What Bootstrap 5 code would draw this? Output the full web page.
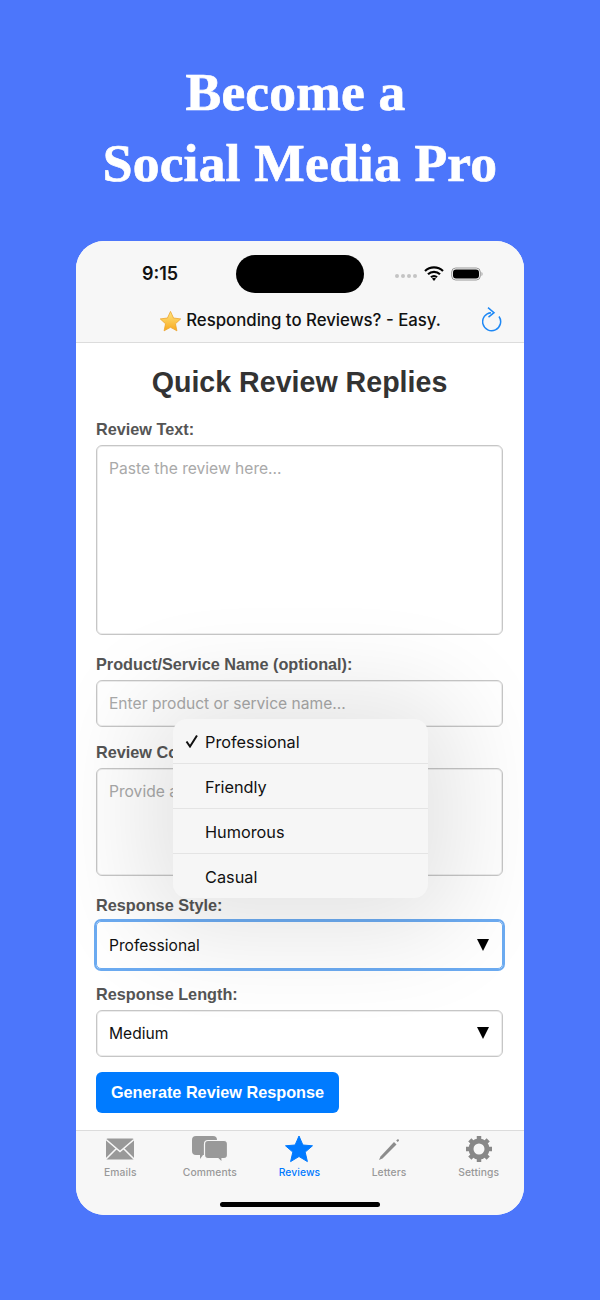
<!DOCTYPE html>
<html lang="en">
<head>
<meta charset="UTF-8">
<title>Quick Review Replies</title>
<link href="https://cdn.jsdelivr.net/npm/bootstrap@5.3.2/dist/css/bootstrap.min.css" rel="stylesheet">
<style>
html, body { height: 1300px; overflow: hidden; }
body { background: #4c76fb; font-family: Inter, "Liberation Sans", sans-serif; }
.promo-title { font-family: "Liberation Serif", serif; font-weight: 700; font-size: 53.5px; line-height: 71px; color: #fff; padding-top: 57px; height: 241px; margin: 0; letter-spacing: .2px; -webkit-text-stroke: .7px #fff; }
.title-first { padding-right: 9px; }
.phone { width: 448px; height: 974px; border-radius: 28px; background: #fff; overflow: hidden; position: relative; }
.top-area { height: 102px; background: #f7f7f7; border-bottom: 1px solid #dcdcdc; }
.status-row { height: 62px; padding: 3px 41px 0 66px; }
.clock { font-size: 18px; font-weight: 600; color: #111; width: 60px; }
.island { width: 128px; height: 38px; background: #000; border-radius: 19px; margin-left: 6px; }
.status-icons { width: 91px; gap: 7px; }
.sig-dots { gap: 2px; }
.sig-dots i { display: block; width: 4px; height: 4px; border-radius: 50%; background: #c4c4c4; }
.page-head { height: 40px; padding: 0 0 4px 0; position: relative; }
.head-text { font-size: 16.8px; font-weight: 500; color: #111; }
.reload-icon { position: absolute; right: 22px; top: 4px; }
.form-area { height: 787px; padding: 20px 21px 0 20px; background: #fff; }
.form-area h1 { font-family: "Liberation Sans", sans-serif; font-size: 28.6px; font-weight: 700; color: #333; text-align: center; margin: 0 0 20px; line-height: 38px; }
.field-label { display: block; font-family: "Liberation Sans", sans-serif; font-weight: 700; font-size: 16.25px; line-height: 16px; color: #555; margin: 0 0 8px; }
.form-control.app-field { border: 1px solid #c6c6c6; border-radius: 6px; font-size: 15.6px; color: #111; padding: 12px 12px; background: transparent; box-shadow: inset 0 0 0 1px #ececec; resize: none; font-family: Inter, sans-serif; line-height: 22px; }
.app-field::placeholder { color: #a9a9a9; opacity: 1; }
.gap-area { margin-bottom: 21px; }
.gap-line { margin-bottom: 17px; }
.select-box { height: 47px; border: 1px solid #c6c6c6; box-shadow: inset 0 0 0 1px #ececec; border-radius: 6px; font-size: 15.6px; color: #111; padding: 0 13px 0 12px; }
.select-box.is-open { height: 48px; border: 1px solid #6cabf1; box-shadow: 0 0 0 2px #6cabf1; border-radius: 5px; padding: 2px 13px 0 12px; }
.caret-mark { width: 0; height: 0; border-left: 6px solid transparent; border-right: 6px solid transparent; border-top: 12px solid #000; margin-top: -2px; }
.gen-btn.btn { background: #007bff; border: 0; border-radius: 6px; height: 41px; width: 243px; font-family: "Liberation Sans", sans-serif; font-weight: 700; font-size: 16.25px; padding: 0; color: #fff; margin-top: -2px; }
.tab-strip { height: 85px; background: #f7f7f7; border-top: 1px solid #dcdcdc; position: absolute; left: 0; right: 0; bottom: 0; }
.tab-item { width: 89.6px; height: 44px; color: #999; font-size: 10.3px; font-weight: 500; text-align: center; padding: 4px 1px 0 0; line-height: 12px; letter-spacing: .1px; }
.tab-item svg { display: block; margin: 0 auto 3px; height: 28px; }
.tab-item.is-on { color: #007aff; }
.home-bar { position: absolute; left: 144px; bottom: 8px; width: 160px; height: 5px; border-radius: 3px; background: #000; }
.style-menu { position: absolute; left: 97px; top: 478px; width: 255px; background: #f6f6f6; border-radius: 14px; box-shadow: 0 5px 100px 30px rgba(0,0,0,.11); z-index: 5; overflow: hidden; }
.menu-row { height: 45px; padding: 3px 0 0 32px; font-size: 16.3px; color: #111; border-bottom: 1px solid #e4e4e4; display: flex; align-items: center; position: relative; }
.menu-row:last-child { border-bottom: 0; height: 44px; }
.tick-mark { position: absolute; left: 12px; top: 15px; }
</style>
</head>
<body>
<h2 class="promo-title text-center"><span class="title-first">Become a</span><br>Social Media Pro</h2>
<div class="phone mx-auto">
    <div class="top-area">
        <div class="status-row d-flex align-items-center justify-content-between">
            <div class="clock">9:15</div>
            <div class="island"></div>
            <div class="status-icons d-flex align-items-center justify-content-end">
                <div class="sig-dots d-flex mt-1"><i></i><i></i><i></i><i></i></div>
                <svg width="20" height="15" viewBox="0 0 20 15"><path d="M1 5a13 13 0 0 1 18 0M4 8.300a8.600 8.600 0 0 1 12 0M7 11.200a4.300 4.300 0 0 1 6 0" fill="none" stroke="#000" stroke-width="2.200"/><path d="M10 15l-2-2.400a3 3 0 0 1 4 0z"/></svg>
                <svg width="32" height="14" viewBox="0 0 32 14"><rect x=".7" y="1" width="28.600" height="12" rx="4" fill="none" stroke="#999"/><rect x="2" y="2.400" width="26" height="9.200" rx="3"/><path d="M30.500 5v4a2 2 0 0 0 1-2 2 2 0 0 0-1-2z" fill="#999"/></svg>
            </div>
        </div>
        <div class="page-head d-flex align-items-center justify-content-center">
            <svg class="me-1" width="23" height="22" viewBox="0 0 24 23"><defs><linearGradient id="starFill" x1="0" y1="0" x2="0" y2="1"><stop offset="0" stop-color="#ffe680"/><stop offset="1" stop-color="#f8a91e"/></linearGradient></defs><path d="M12 1.500l3.200 6.900 7.500.9-5.500 5.100 1.500 7.400L12 18.100l-6.700 3.700 1.500-7.400L1.300 9.300l7.500-.9z" fill="url(#starFill)" stroke="#eda32a" stroke-width=".8" stroke-linejoin="round"/></svg>
            <span class="head-text">Responding to Reviews? - Easy.</span>
            <svg class="reload-icon" width="20" height="26" viewBox="0 0 20 26"><path d="M9 5.700A9 9 0 1 0 17 9.500" fill="none" stroke="#1e88f5" stroke-width="1.500"/><path d="M6 .7l6 5-5.500 4.500" fill="none" stroke="#1e88f5" stroke-width="1.500"/></svg>
        </div>
    </div>
    <form class="form-area">
        <h1>Quick Review Replies</h1>
        <label class="field-label">Review Text:</label>
        <textarea class="form-control app-field gap-area" style="height:190px" placeholder="Paste the review here..."></textarea>
        <label class="field-label">Product/Service Name (optional):</label>
        <input class="form-control app-field gap-line" style="height:47px" placeholder="Enter product or service name...">
        <label class="field-label">Review Context:</label>
        <textarea class="form-control app-field gap-area" style="height:108px" placeholder="Provide any additional context..."></textarea>
        <label class="field-label">Response Style:</label>
        <div class="select-box is-open gap-line d-flex align-items-center justify-content-between"><span>Professional</span><span class="caret-mark"></span></div>
        <label class="field-label">Response Length:</label>
        <div class="select-box gap-line d-flex align-items-center justify-content-between"><span>Medium</span><span class="caret-mark"></span></div>
        <button type="button" class="btn gen-btn">Generate Review Response</button>
    </form>
    <div class="style-menu">
        <div class="menu-row"><svg class="tick-mark" width="14" height="14" viewBox="0 0 14 14"><path d="M1.500 7.500l3.500 5 7-11" fill="none" stroke="#111" stroke-width="2"/></svg>Professional</div>
        <div class="menu-row">Friendly</div>
        <div class="menu-row">Humorous</div>
        <div class="menu-row">Casual</div>
    </div>
    <nav class="tab-strip d-flex">
        <div class="tab-item">
            <svg width="30" height="28" viewBox="0 0 30 28"><rect x="1" y="3.500" width="28" height="21" rx="1.500" fill="#999"/><path d="M1 4.500l14 12 14-12M1 24l10.500-10.500M29 24L18.500 13.500" fill="none" stroke="#f7f7f7" stroke-width="1.600"/></svg>
            Emails
        </div>
        <div class="tab-item">
            <svg width="36" height="28" viewBox="0 0 36 28"><path d="M4 1h17a4 4 0 0 1 4 4v11a4 4 0 0 1-4 4H11l-3 4v-4H4a4 4 0 0 1-4-4V5a4 4 0 0 1 4-4z" fill="#999"/><path d="M16 5.500h16a3.500 3.500 0 0 1 3.500 3.500v11a3.500 3.500 0 0 1-3.500 3.500h-2v4l-4-4H16a3.500 3.500 0 0 1-3.500-3.500V9A3.500 3.500 0 0 1 16 5.500z" fill="#999" stroke="#f7f7f7" stroke-width="1.200"/></svg>
            Comments
        </div>
        <div class="tab-item is-on">
            <svg width="28" height="28" viewBox="0 0 28 28"><path d="M14 1l3.900 9 9.600.8-7.300 6.300 2.200 9.500L14 21.500l-8.400 5.100 2.200-9.500L.5 10.800l9.600-.8z" fill="#007aff" stroke="#007aff" stroke-linejoin="round"/></svg>
            Reviews
        </div>
        <div class="tab-item">
            <svg width="22" height="28" viewBox="0 0 22 28"><path d="M1 25l1.500-3.500L16 7l2.500 2.500L4.500 23.500z" fill="#8c8c8c"/><path d="M18.200 5.600l1.500 1.500 1-1.100a1 1 0 0 0-1.500-1.500z" fill="#8c8c8c"/></svg>
            Letters
        </div>
        <div class="tab-item">
            <svg width="26" height="28" viewBox="0 0 26 28"><circle cx="13" cy="14" r="8" fill="none" stroke="#888" stroke-width="5"/><path d="M13 1v26M0 14h26M3.800 4.800l18.400 18.400M22.200 4.800L3.800 23.200" stroke="#888" stroke-width="4.500" stroke-dasharray="4.500 17 4.500"/></svg>
            Settings
        </div>
    </nav>
    <div class="home-bar"></div>
</div>
<script src="https://cdn.jsdelivr.net/npm/bootstrap@5.3.2/dist/js/bootstrap.bundle.min.js"></script>
</body>
</html>
